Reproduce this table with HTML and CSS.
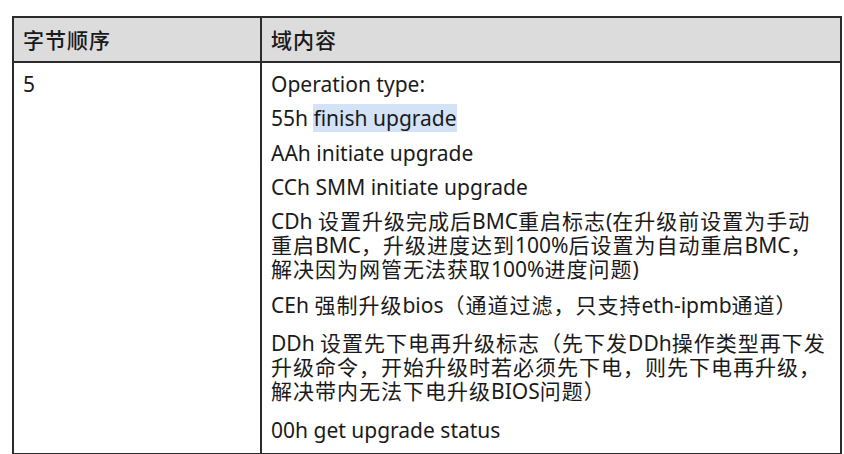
FILE: index.html
```html
<!DOCTYPE html>
<html lang="zh-CN">
<head>
<meta charset="utf-8">
<title>字节顺序</title>
<link rel="stylesheet" href="styles.css">
</head>
<body>
<table class="spec">
  <colgroup>
    <col class="col-order">
    <col class="col-content">
  </colgroup>
  <thead>
    <tr>
      <th><span class="zh">字节顺序</span></th>
      <th><span class="zh">域内容</span></th>
    </tr>
  </thead>
  <tbody>
    <tr>
      <td><p>5</p></td>
      <td>
        <p>Operation type:</p>
        <p>55h <span class="hl">finish upgrade</span></p>
        <p>AAh initiate upgrade</p>
        <p>CCh SMM initiate upgrade</p>
        <p>CDh <span class="zh">设置升级完成后</span>BMC<span class="zh">重启标志</span>(<span class="zh">在升级前设置为手动重启</span>BMC<span class="zh">，升级进度达到</span>100%<span class="zh">后设置为自动重启</span>BMC<span class="zh">，解决因为网管无法获取</span>100%<span class="zh">进度问题</span>)</p>
        <p class="gap-m">CEh <span class="zh">强制升级</span>bios<span class="zh">（通道过滤，只支持</span>eth-ipmb<span class="zh">通道）</span></p>
        <p class="gap-l">DDh <span class="zh">设置先下电再升级标志（先下发</span>DDh<span class="zh">操作类型再下发升级命令，开始升级时若必须先下电，则先下电再升级，解决带内无法下电升级</span>BIOS<span class="zh">问题）</span></p>
        <p class="gap-xl">00h get upgrade status</p>
      </td>
    </tr>
  </tbody>
</table>
</body>
</html>
```
FILE: styles.css
```css
html, body {
  margin: 0;
  padding: 0;
  background: #ffffff;
}
body {
  padding: 16px 4px 0 12px;
  font-family: "Noto Sans", "Noto Sans CJK SC", sans-serif;
  font-size: 21px;
  line-height: 24px;
  color: #1a1a1a;
}
.spec {
  border-collapse: collapse;
  width: 828px;
  table-layout: fixed;
  border: 2px solid #2b2b2b;
}
.col-order { width: 248px; }
.col-content { width: 580px; }
.spec th,
.spec td {
  border: 2px solid #2b2b2b;
  text-align: left;
  vertical-align: top;
}
.spec th {
  background: #dcdcdc;
  font-weight: 500;
  height: 43px;
  padding: 0 11px 0 9px;
  vertical-align: middle;
}
.spec td {
  padding: 9px 11px 11px 9px;
}
.spec p {
  margin: 0;
}
.spec p + p {
  margin-top: 10.3px;
}
.spec p.gap-m {
  margin-top: 12px;
}
.spec p.gap-l {
  margin-top: 14px;
}
.spec p.gap-xl {
  margin-top: 15px;
}
.zh {
  letter-spacing: 1px;
}
.hl {
  background: #d3e2f7;
}
```
